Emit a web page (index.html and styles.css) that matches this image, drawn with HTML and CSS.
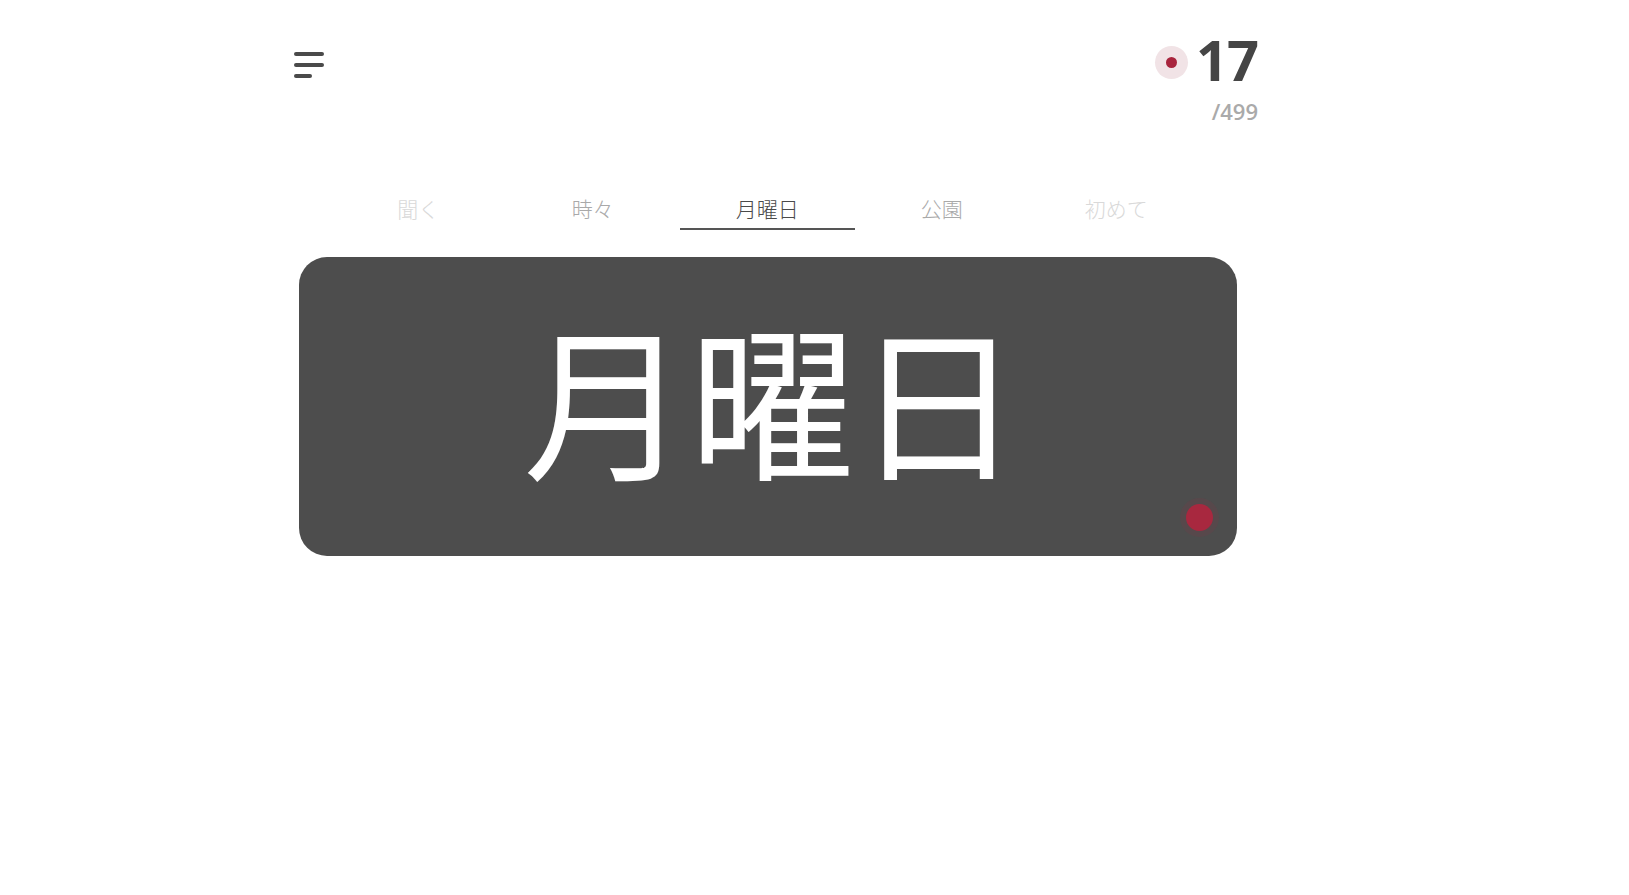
FILE: index.html
```html
<!DOCTYPE html>
<html lang="ja">
<head>
<meta charset="utf-8">
<title>月曜日</title>
<link rel="stylesheet" href="styles.css">
</head>
<body>
<div class="page">
  <header class="header">
    <button class="menu" aria-label="menu">
      <span class="bar"></span>
      <span class="bar"></span>
      <span class="bar short"></span>
    </button>
    <div class="counter">
      <div class="counter-main">
        <span class="badge"><span class="badge-dot"></span></span>
        <span class="count">17</span>
      </div>
      <div class="total">/499</div>
    </div>
  </header>

  <nav class="tabs">
    <div class="tab faint">聞く</div>
    <div class="tab mid">時々</div>
    <div class="tab active">月曜日</div>
    <div class="tab mid">公園</div>
    <div class="tab faint">初めて</div>
  </nav>

  <section class="card">
    <div class="word">月曜日</div>
    <span class="rec-dot"></span>
  </section>
</div>
</body>
</html>
```

FILE: styles.css
```css
html, body {
  margin: 0;
  padding: 0;
  background: #ffffff;
}

body {
  font-family: "Open Sans", "Noto Sans CJK JP", sans-serif;
  color: #4a4a4a;
}

.page {
  width: 964px;
  margin-left: 294px;
  padding-top: 31px;
}

.header {
  display: flex;
  justify-content: space-between;
  align-items: flex-start;
}

.menu {
  margin-top: 21px;
  padding: 0;
  border: 0;
  background: none;
  display: flex;
  flex-direction: column;
  gap: 7px;
  width: 30px;
}

.bar {
  display: block;
  width: 30px;
  height: 4px;
  border-radius: 2px;
  background: #4a4a4a;
}

.bar.short {
  width: 18px;
}

.counter {
  display: flex;
  flex-direction: column;
  align-items: flex-end;
}

.counter-main {
  display: flex;
  align-items: center;
  gap: 8px;
}

.badge {
  width: 33px;
  height: 33px;
  border-radius: 50%;
  background: #f1e3e6;
  display: flex;
  align-items: center;
  justify-content: center;
  margin-top: 6px;
}

.badge-dot {
  width: 11px;
  height: 11px;
  border-radius: 50%;
  background: #a8243d;
}

.count {
  font-size: 56px;
  line-height: 56px;
  font-weight: 700;
  color: #454545;
  letter-spacing: -1px;
}

.total {
  margin-top: 12px;
  font-size: 22px;
  line-height: 24px;
  font-weight: 600;
  color: #aaaaaa;
}

.tabs {
  display: grid;
  grid-template-columns: repeat(5, 174.5px);
  margin-left: 37px;
  margin-top: 70px;
}

.tab {
  font-family: "Noto Sans CJK JP", sans-serif;
  font-weight: 300;
  font-size: 21px;
  line-height: 30px;
  text-align: center;
  padding-bottom: 5px;
  border-bottom: 2px solid transparent;
}

.tab.faint {
  color: #d9d9d9;
}

.tab.mid {
  color: #a9a9a9;
}

.tab.active {
  color: #4a4a4a;
  border-bottom-color: #555555;
}

.card {
  position: relative;
  box-sizing: border-box;
  width: 938px;
  height: 299px;
  margin-left: 5px;
  margin-top: 27px;
  border-radius: 28px;
  background: #4d4d4d;
  display: flex;
  align-items: center;
  justify-content: center;
}

.word {
  font-family: "Noto Sans CJK JP", sans-serif;
  font-size: 166px;
  line-height: 1;
  color: #ffffff;
  margin-left: 8px;
  margin-bottom: 22px;
}

.rec-dot {
  position: absolute;
  right: 24px;
  bottom: 25px;
  width: 27px;
  height: 27px;
  border-radius: 50%;
  background: #a8283f;
  box-shadow: 0 0 0 6px rgba(168, 40, 63, 0.12);
}
```
